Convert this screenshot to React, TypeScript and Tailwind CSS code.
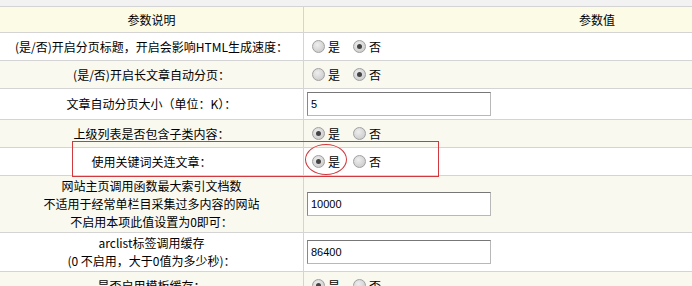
import React from 'react';

type Row =
  | { kind: 'radio'; label: string[]; yes: boolean; h: string; bg: string }
  | { kind: 'input'; label: string[]; value: string; h: string; bg: string };

const rows: Row[] = [
  { kind: 'radio', label: ['(是/否)开启分页标题，开启会影响HTML生成速度：'], yes: false, h: 'h-[28px]', bg: 'bg-white' },
  { kind: 'radio', label: ['(是/否)开启长文章自动分页：'], yes: false, h: 'h-[28px]', bg: 'bg-[#f9f9f0]' },
  { kind: 'input', label: ['文章自动分页大小（单位：K）：'], value: '5', h: 'h-[31px]', bg: 'bg-white' },
  { kind: 'radio', label: ['上级列表是否包含子类内容：'], yes: true, h: 'h-[28px]', bg: 'bg-[#f9f9f0]' },
  { kind: 'radio', label: ['使用关键词关连文章：'], yes: true, h: 'h-[28px]', bg: 'bg-white' },
  {
    kind: 'input',
    label: ['网站主页调用函数最大索引文档数', '不适用于经常单栏目采集过多内容的网站', '不启用本项此值设置为0即可：'],
    value: '10000',
    h: 'h-[57px]',
    bg: 'bg-[#f9f9f0]',
  },
  { kind: 'input', label: ['arclist标签调用缓存', '(0 不启用，大于0值为多少秒)：'], value: '86400', h: 'h-[39px]', bg: 'bg-white' },
  { kind: 'radio', label: ['是否启用模板缓存：'], yes: true, h: 'h-[28px]', bg: 'bg-[#f9f9f0]' },
];

const Radio = ({ checked }: { checked: boolean }) => (
  <span className="ml-[5px] mr-[3px] flex h-[13px] w-[13px] items-center justify-center rounded-full border border-[#a0a0a0] bg-[radial-gradient(circle_at_40%_35%,#eeeeee,#c4c4c4)]">
    {checked && <span className="h-[5px] w-[5px] rounded-full bg-[#444]" />}
  </span>
);

export default function App() {
  return (
    <div className="relative h-[286px] w-[692px] overflow-hidden bg-white text-[12px] text-black [font-family:'Noto_Sans_CJK_SC',sans-serif]">
      <div className="h-[7px] border-b border-[#d4d4d4] bg-[#f2f2f2]" />
      <div className="w-[890px]">
        <div className="flex h-[26px] border-b border-[#d4d4d4] bg-[#fbfbe6]">
          <div className="flex w-[304px] items-center justify-center border-r border-[#d4d4d4]">参数说明</div>
          <div className="flex flex-1 items-center justify-center">参数值</div>
        </div>
        {rows.map((r, i) => (
          <div key={i} className={`flex border-b border-[#d4d4d4] ${r.h} ${r.bg}`}>
            <div className="flex w-[304px] flex-col items-center justify-center border-r border-[#d4d4d4] leading-[18px]">
              {r.label.map((l) => (
                <div key={l}>{l}</div>
              ))}
            </div>
            <div className="flex flex-1 items-center pl-[3px]">
              {r.kind === 'radio' ? (
                <div className="flex items-center">
                  <Radio checked={r.yes} />
                  <span className="mr-[8px]">是</span>
                  <Radio checked={!r.yes} />
                  <span>否</span>
                </div>
              ) : (
                <div className="flex h-[24px] w-[184px] items-center border border-[#b8b8b8] border-l-[#888] border-t-[#777] bg-white pl-[3px] text-[11px] [font-family:'Liberation_Sans',sans-serif]">
                  {r.value}
                </div>
              )}
            </div>
          </div>
        ))}
      </div>
      <div className="absolute left-[72px] top-[141px] h-[36px] w-[367px] border border-[#d0393e]" />
      <div className="absolute left-[305px] top-[144px] h-[31px] w-[42px] rounded-[50%] border border-[#d0393e]" />
    </div>
  );
}
